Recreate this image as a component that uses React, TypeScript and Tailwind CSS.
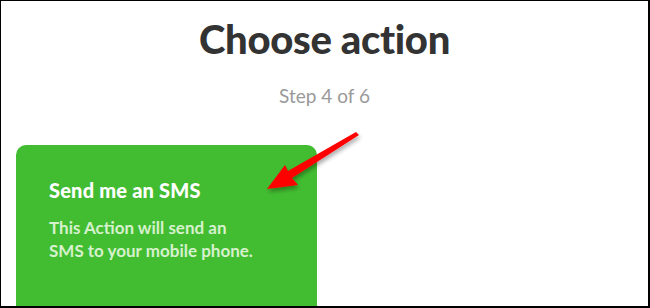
import React from "react";

const font = { fontFamily: "Lato, 'Open Sans', sans-serif" };

// Flecha roja que apunta a la tarjeta
const Arrow: React.FC = () => (
  <svg
    className="absolute left-[250px] top-[120px] w-[120px] h-[80px]"
    viewBox="250 120 120 80"
  >
    <defs>
      <filter id="sh" x="-20%" y="-20%" width="140%" height="160%">
        <feDropShadow dx="1" dy="3" stdDeviation="2" floodColor="#000" floodOpacity="0.35" />
      </filter>
    </defs>
    <polygon
      points="266,188 284,164 287,170 355,131 358,134 291,177 297,184"
      fill="#ff0000"
      filter="url(#sh)"
    />
  </svg>
);

const App: React.FC = () => {
  return (
    <div
      className="relative w-[650px] h-[308px] bg-white border-l border-t border-r-2 border-b-2 border-black overflow-hidden flex flex-col"
      style={font}
    >
      <h1 className="mt-[14px] text-center text-[40px] leading-[48px] font-black text-[#333333] tracking-[-0.3px]">
        Choose action
      </h1>
      <p className="mt-[21px] text-center text-[19px] leading-[24px] text-[#999999]">Step 4 of 6</p>

      {/* Tarjeta verde */}
      <div className="mt-[37px] ml-[15px] w-[301px] flex-1 rounded-t-[10px] bg-[#42bd31] px-[33px] pt-[32px]">
        <h2 className="text-[20px] leading-[26px] font-black text-white tracking-[0.2px]">Send me an SMS</h2>
        <p className="mt-[13px] text-[17px] leading-[23px] font-bold text-[#d6f1cd]">
          This Action will send an
          <br />
          SMS to your mobile phone.
        </p>
      </div>

      <Arrow />
    </div>
  );
};

export default App;
